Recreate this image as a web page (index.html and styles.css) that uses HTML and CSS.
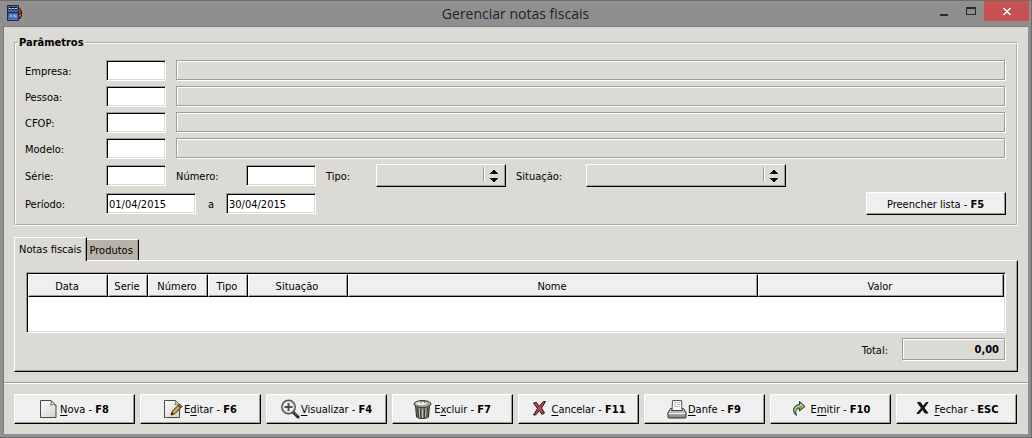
FILE: index.html
```html
<!DOCTYPE html>
<html lang="pt-BR">
<head>
<meta charset="utf-8">
<title>Gerenciar notas fiscais</title>
<link rel="stylesheet" href="styles.css">
</head>
<body>
<div class="window">
  <header class="titlebar">
    <svg class="app-icon" width="16" height="16" viewBox="0 0 16 16" aria-hidden="true">
      <path d="M11 2l2 1 2 3v5l-2 3h-2z" fill="#33211c"/>
      <path d="M12 3l2 2v3l-2 1z" fill="#b92a1e"/>
      <path d="M13 9l1 1-1 2-1-1z" fill="#c89a3c"/>
      <rect width="12" height="16" rx="1" fill="#1b2a4a"/>
      <rect x="1" y="1" width="10" height="6" fill="#54677f"/>
      <path d="M2 2h8v1H2zM2 4h2v1H2zM5 4h2v1H5zM8 4h2v1H8z" fill="#101a2c"/>
      <path d="M2 3h2v1H2zM5 3h2v1H5zM8 3h2v1H8z" fill="#c5d0dc"/>
      <rect x="1" y="8" width="10" height="6" fill="#3862bb"/>
      <path d="M2.500 12.500l1.500-3 1 3M7 12.500v-3l2 3v-3" fill="none" stroke="#a9c3f2"/>
      <rect x="1" y="14" width="10" height="1" fill="#5878b5"/>
    </svg>
    <h1 class="title">Gerenciar notas fiscais</h1>
    <div class="controls">
      <button class="control" type="button" aria-label="Minimizar"><svg width="10" height="10" viewBox="0 0 10 10"><path d="M1 8h8v2H1z" fill="#2b2b2b"/></svg></button>
      <button class="control" type="button" aria-label="Maximizar"><svg width="10" height="10" viewBox="0 0 10 10"><path fill-rule="evenodd" d="M0 1h10v8H0zM1 3v5h8V3z" fill="#2b2b2b"/></svg></button>
      <button class="control close" type="button" aria-label="Fechar janela"><svg width="8" height="8" viewBox="0 0 8 8" shape-rendering="crispEdges"><path d="M0 1h2v1h1v1h2V2h1V1h2v1H7v1H6v1H5v1h1v1h1v1h1v1H6V7H5V6H3v1H2v1H0V7h1V6h1V5h1V4H2V3H1V2H0z" fill="#fff"/></svg></button>
    </div>
  </header>

  <main class="client">
    <div class="content">
      <fieldset class="group">
        <legend>Parâmetros</legend>
        <div class="row">
          <label class="lead" for="empresa">Empresa:</label>
          <input class="field small" id="empresa" type="text">
          <output class="etched grow" for="empresa"></output>
        </div>
        <div class="row">
          <label class="lead" for="pessoa">Pessoa:</label>
          <input class="field small" id="pessoa" type="text">
          <output class="etched grow" for="pessoa"></output>
        </div>
        <div class="row">
          <label class="lead" for="cfop">CFOP:</label>
          <input class="field small" id="cfop" type="text">
          <output class="etched grow" for="cfop"></output>
        </div>
        <div class="row">
          <label class="lead" for="modelo">Modelo:</label>
          <input class="field small" id="modelo" type="text">
          <output class="etched grow" for="modelo"></output>
        </div>
        <div class="row">
          <label class="lead" for="serie">Série:</label>
          <input class="field small" id="serie" type="text">
          <label class="mid spaced" for="numero">Número:</label>
          <input class="field medium" id="numero" type="text">
          <label class="short spaced" for="tipo">Tipo:</label>
          <span class="combo combo-small">
            <select id="tipo"><option></option></select>
            <svg class="arrows" width="12" height="15" viewBox="0 0 12 15" aria-hidden="true"><path d="M0 0h1v15H0z" fill="#9d9c98"/><path d="M1 0h1v15H1z" fill="#fff"/></svg>
            <svg class="arrows heads" width="8" height="12" viewBox="0 0 8 12" aria-hidden="true" shape-rendering="crispEdges"><path d="M3 0h2v1h1v1h1v1h1v1H0V3h1V2h1V1h1zM0 8h8v1H7v1H6v1H5v1H3v-1H2v-1H1V9H0z"/></svg>
          </span>
          <label class="mid spaced" for="situacao">Situação:</label>
          <span class="combo combo-large">
            <select id="situacao"><option></option></select>
            <svg class="arrows" width="12" height="15" viewBox="0 0 12 15" aria-hidden="true"><path d="M0 0h1v15H0z" fill="#9d9c98"/><path d="M1 0h1v15H1z" fill="#fff"/></svg>
            <svg class="arrows heads" width="8" height="12" viewBox="0 0 8 12" aria-hidden="true" shape-rendering="crispEdges"><path d="M3 0h2v1h1v1h1v1h1v1H0V3h1V2h1V1h1zM0 8h8v1H7v1H6v1H5v1H3v-1H2v-1H1V9H0z"/></svg>
          </span>
        </div>
        <div class="row">
          <label class="lead" for="inicio">Período:</label>
          <input class="field date" id="inicio" type="text" value="01/04/2015">
          <label class="until" for="fim">a</label>
          <input class="field date" id="fim" type="text" value="30/04/2015">
          <button class="button fill-list" type="button"><span class="caption">Preencher lista - <b>F5</b></span></button>
        </div>
      </fieldset>

      <div class="tabs" role="tablist">
        <button class="tab active" type="button" role="tab" aria-selected="true">Notas fiscais</button>
        <button class="tab" type="button" role="tab" aria-selected="false">Produtos</button>
      </div>
      <section class="panel" role="tabpanel">
        <div class="list">
          <table>
            <colgroup><col class="c80"><col class="c40"><col class="c60"><col class="c40"><col class="c100"><col><col class="c246"></colgroup>
            <thead>
              <tr><th>Data</th><th>Serie</th><th>Número</th><th>Tipo</th><th>Situação</th><th>Nome</th><th>Valor</th></tr>
            </thead>
          </table>
        </div>
        <div class="total">
          <label for="total">Total:</label>
          <output class="etched sum" id="total">0,00</output>
        </div>
      </section>
    </div>

    <footer class="actions">
      <button class="button" type="button">
        <svg class="icon" width="20" height="20" viewBox="0 0 20 20" aria-hidden="true"><defs><linearGradient id="paper" x1="0" y1="0" x2="1" y2="1"><stop offset="0" stop-color="#fff"/><stop offset="1" stop-color="#d0d0cb"/></linearGradient></defs><path d="M1.500 1.500h10.500l5 5v12H1.500z" fill="url(#paper)" stroke="#4c4c47"/><path d="M12 1.500c.5 2 .5 3-.5 4.500 2-.5 3.500-.500 5.500.500z" fill="#fff" stroke="#66665f"/></svg>
        <span class="caption"><u>N</u>ova - <b>F8</b></span>
      </button>
      <button class="button" type="button">
        <svg class="icon" width="20" height="20" viewBox="0 0 20 20" aria-hidden="true"><path d="M1.500 1.500h11l4 4v13h-15z" fill="url(#paper)" stroke="#4c4c47"/><path d="M12.500 1.500c.5 2 .5 3-.5 4 2-.5 3-.500 4.500 0z" fill="#fff" stroke="#66665f"/><path d="M8 16l1.500-4L15.500 6 18 8.500l-6 6z" fill="#d6aa42" stroke="#2f250e"/><path d="M15 6.500L16.500 5l2.500 2.500L17.500 9z" fill="#777" stroke="#333"/><path d="M8 16l1-2.500L10.500 15z" fill="#111"/></svg>
        <span class="caption">E<u>d</u>itar - <b>F6</b></span>
      </button>
      <button class="button" type="button">
        <svg class="icon" width="20" height="20" viewBox="0 0 20 20" aria-hidden="true"><path d="M13 13l5 5" stroke="#222" stroke-width="3" stroke-linecap="round"/><path d="M14 13.500l3 3" stroke="#888" stroke-width="1"/><circle cx="8.500" cy="8" r="6.700" fill="#f4f4f2" stroke="#4d4d52" stroke-width="1.500"/><circle cx="8.500" cy="8" r="5.500" fill="none" stroke="#bdbdba"/><path d="M7.500 4h2v3h3v2h-3v3h-2V9h-3V7h3z" fill="#4c4c4c"/></svg>
        <span class="caption"><u>V</u>isualizar - <b>F4</b></span>
      </button>
      <button class="button" type="button">
        <svg class="icon" width="20" height="20" viewBox="0 0 20 20" aria-hidden="true"><path d="M2.500 6h14l-1 12c-2.600 2-9.400 2-12 0z" fill="#77766a" stroke="#26261f"/><path d="M4.800 9l.6 9M7.500 10l.2 9M11.500 10l-.2 9M14.300 9l-.6 9" stroke="#34342c" stroke-width="1"/><path d="M6.300 9.500l.3 9M9.500 10v9M13 9.500l-.3 9" stroke="#c9c8b4"/><ellipse cx="9.500" cy="5" rx="8.500" ry="3.500" fill="#a9a896" stroke="#3a3a31"/><ellipse cx="8.500" cy="4.200" rx="5.500" ry="1.800" fill="#eeede0"/><path d="M7.500 4C8 1 11.500 1 12 4" fill="none" stroke="#44443a"/></svg>
        <span class="caption">E<u>x</u>cluir - <b>F7</b></span>
      </button>
      <button class="button" type="button">
        <svg class="icon" width="20" height="20" viewBox="0 0 20 20" aria-hidden="true"><path d="M3.500 4l3-.5L9 7.500l4.500-5h2l-4 6.500 3 5-2.500 1.500-2.500-4-4 4.500H3.500l4-6.500z" fill="#c0464f" stroke="#2b1013" stroke-linejoin="round"/></svg>
        <span class="caption"><u>C</u>ancelar - <b>F11</b></span>
      </button>
      <button class="button" type="button">
        <svg class="icon" width="20" height="20" viewBox="0 0 20 20" aria-hidden="true"><defs><linearGradient id="tray" x1="0" y1="0" x2="0" y2="1"><stop offset="0" stop-color="#d8d8d4"/><stop offset="1" stop-color="#85857f"/></linearGradient></defs><path d="M3.500 9.500h13l2.500 4V18q0 1-1 1H2q-1 0-1-1v-4.500z" fill="url(#tray)" stroke="#333330"/><path d="M5 11.500l.5-10h9l.5 10z" fill="#fafafa" stroke="#55554f"/><path d="M7 3.500h4M12 3.500h1M7 5.500h2M10 5.500h3M7 7.500h4M12 7.500h1" stroke="#bbb"/><path d="M4 11.500h12" stroke="#3f3f3c"/><path d="M2 14.500h16" stroke="#f4f4f2"/></svg>
        <span class="caption"><u>D</u>anfe - <b>F9</b></span>
      </button>
      <button class="button" type="button">
        <svg class="icon" width="20" height="20" viewBox="0 0 20 20" aria-hidden="true"><path d="M6.500 16.500C2 13.500 2.500 6 9.500 5.500V2.500l5.500 5-5.500 4.500V9.500C6 9.500 5 12.500 6.500 16.500z" fill="#82a75c" stroke="#2d3a23" stroke-linejoin="round"/><path d="M5 12C5 8.500 7.500 6.800 10.500 6.700V5L13 7.500" fill="none" stroke="#c4dca5"/></svg>
        <span class="caption">E<u>m</u>itir - <b>F10</b></span>
      </button>
      <button class="button" type="button">
        <svg class="icon" width="20" height="20" viewBox="0 0 20 20" aria-hidden="true"><path d="M4.500 3.500h3l2.500 4 3-4h2l-4 5.500 4 5h-3l-2.500-3.500L6 14.500H4L8.500 9z" fill="#111" stroke="#111" stroke-linejoin="round"/></svg>
        <span class="caption"><u>F</u>echar - <b>ESC</b></span>
      </button>
    </footer>
  </main>
</div>
</body>
</html>
```
FILE: styles.css
```css
:root {
  --face: #dbdad5;
  --button: #efefef;
  --shade: #9d9c98;
}

* { box-sizing: border-box; }

body {
  margin: 0;
  color: #000;
  font: 11px/14px "DejaVu Sans Condensed", "DejaVu Sans", Tahoma, sans-serif;
}

button, input, select, output { font: inherit; color: inherit; }

.window {
  display: flex;
  flex-direction: column;
  min-height: 100vh;
  padding: 0 3px 3px;
  background: #8f8f8f;
  border: 1px solid #6d6d6d;
  border-width: 1px 1px 1px 0;
}

.titlebar {
  display: grid;
  grid-template-columns: 1fr auto 1fr;
  align-items: start;
  height: 25px;
}

.app-icon { margin: 4px; }

.title {
  margin: 0;
  font: 14px/25px "Open Sans", "Noto Sans", sans-serif;
  color: #222;
}

.controls {
  display: flex;
  justify-content: flex-end;
  margin-right: -1px;
}

.control {
  display: flex;
  align-items: center;
  justify-content: center;
  width: 27px;
  height: 20px;
  padding: 0;
  border: 0;
  background: none;
}

.close { width: 45px; background: #c75050; }

.client {
  display: flex;
  flex: 1;
  flex-direction: column;
  background: var(--face);
  border: 1px solid #7c7c7c;
  border-width: 1px 0 0 1px;
}

.content {
  display: flex;
  flex: 1;
  flex-direction: column;
  padding: 9px 10px 10px;
}

.group {
  display: flex;
  flex-direction: column;
  gap: 5px;
  min-width: 0;
  margin: 0;
  padding: 10px 10px 9px 9px;
  border: 2px groove #fff;
}

.group legend {
  margin-left: -7px;
  padding: 0 1px;
  font-weight: bold;
}

.row { display: flex; align-items: center; }

label, .caption { padding-top: 2px; }

.lead { width: 81px; }
.mid { width: 70px; }
.short { width: 50px; }
.until { width: 30px; text-align: center; }
.spaced { margin-left: 10px; }

.field {
  height: 21px;
  padding: 2px 2px 0;
  background: #fff;
  border: 1px solid;
  border-color: var(--shade) #fff #fff var(--shade);
  border-radius: 0;
  box-shadow: inset 1px 1px #000, inset -1px -1px var(--face);
}

.small { width: 60px; }
.medium { width: 70px; }
.date { width: 90px; }

.etched {
  height: 20px;
  margin: 0 1px 1px 0;
  border: 1px solid var(--shade);
  box-shadow: 1px 1px #fff, inset 1px 1px #fff;
}

.grow { flex: 1; margin-left: 10px; }

.button, .combo select {
  border: 1px solid;
  border-color: #fff #000 #000 #fff;
  border-radius: 0;
  box-shadow: inset -1px -1px var(--shade);
}

.button {
  display: flex;
  align-items: center;
  justify-content: center;
  gap: 1px;
  padding: 0 1px 0 0;
  background: var(--button);
  white-space: nowrap;
}

.fill-list { width: 140px; height: 23px; margin-left: auto; }

.combo { position: relative; height: 23px; }
.combo-small { width: 130px; }
.combo-large { width: 200px; }

.combo select {
  width: 100%;
  height: 100%;
  padding: 0 24px 0 4px;
  appearance: none;
  background: var(--face);
}

.arrows {
  position: absolute;
  top: 3px;
  right: 11px;
  pointer-events: none;
}

.heads { top: 6px; right: 8px; }

.tabs {
  display: flex;
  align-items: flex-end;
  margin-top: 11px;
}

.tab {
  height: 21px;
  padding: 2px 5px 0 3px;
  background: #b8b3a8;
  border: 0;
  border-top: 1px solid #fff;
  border-right: 1px solid #000;
  box-shadow: inset -1px 0 var(--shade);
}

.tab.active {
  z-index: 1;
  height: 24px;
  margin-bottom: -1px;
  padding: 0 4px;
  background: var(--face);
  border-left: 1px solid #fff;
}

.panel {
  display: flex;
  flex: 1;
  flex-direction: column;
  gap: 5px;
  padding: 11px 11px 10px;
  border: 1px solid;
  border-color: #fff #000 #000 #fff;
  box-shadow: inset -1px -1px var(--shade);
}

.list {
  flex: 1;
  min-height: 60px;
  padding: 1px;
  background: #fff;
  border: 1px solid;
  border-color: var(--shade) #fff #fff var(--shade);
  box-shadow: inset 1px 1px #000, inset -1px -1px var(--face);
}

.list table {
  width: 100%;
  table-layout: fixed;
  border-spacing: 0;
}

.list th {
  height: 23px;
  padding: 2px 2px 0 0;
  font-weight: normal;
  background: var(--button);
  border: 1px solid;
  border-color: #fff #000 #000 #fff;
  box-shadow: inset -1px -1px var(--shade);
}

.c40 { width: 40px; }
.c60 { width: 60px; }
.c80 { width: 80px; }
.c100 { width: 100px; }
.c246 { width: 246px; }

.total {
  display: flex;
  align-items: center;
  justify-content: flex-end;
  gap: 14px;
}

.sum {
  width: 103px;
  height: 22px;
  padding: 1px 5px 0;
  font-weight: bold;
  line-height: 20px;
  text-align: right;
}

.actions {
  display: grid;
  grid-template-columns: repeat(8, 1fr);
  gap: 5px;
  padding: 11px 11px 10px 10px;
  border-top: 1px solid var(--shade);
  box-shadow: inset 0 1px #fff;
}

.actions .button { height: 30px; }

.icon { flex: none; }

u { text-underline-offset: 2px; }
```
